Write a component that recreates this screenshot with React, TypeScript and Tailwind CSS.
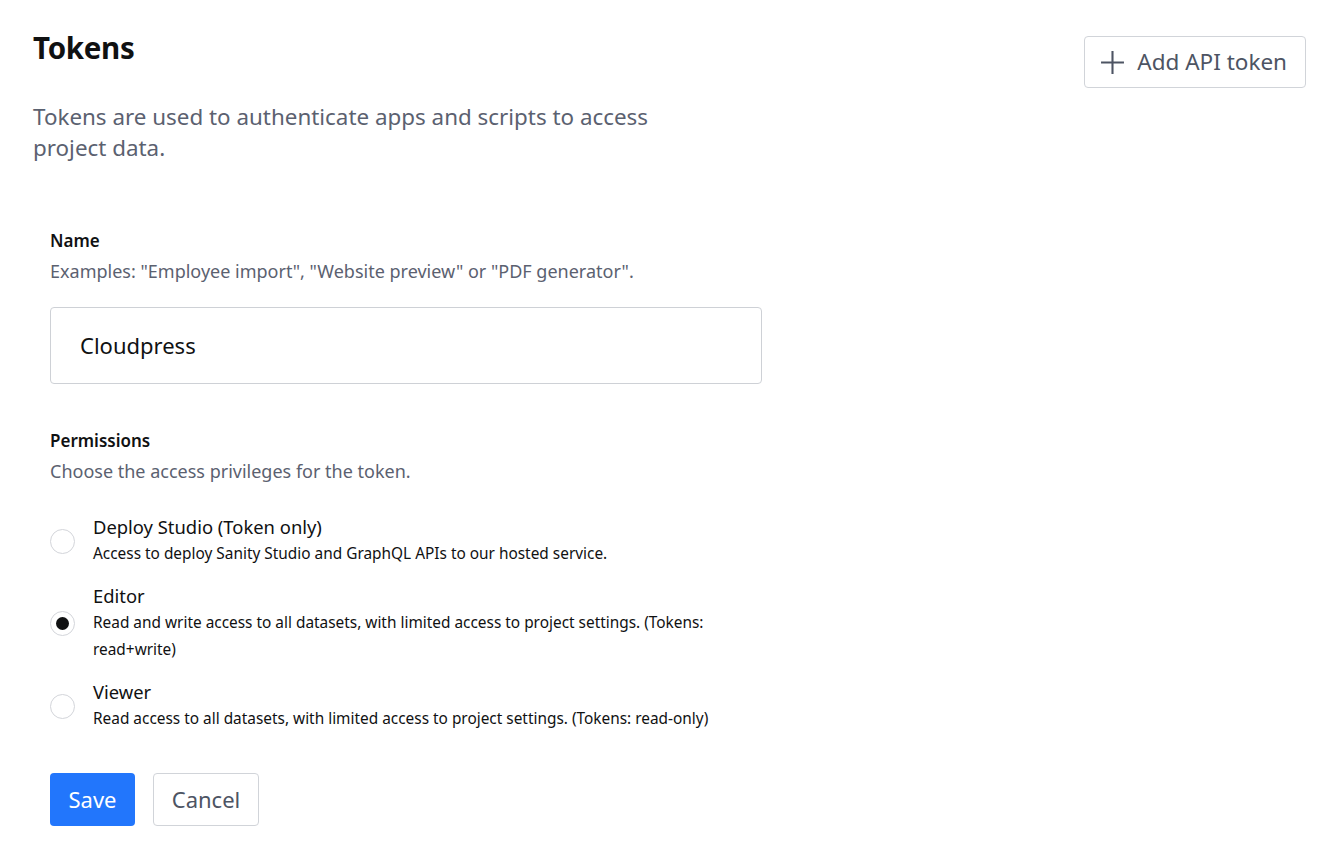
import React from "react";

function Radio({ checked }: { checked?: boolean }) {
  return (
    <span className="mt-[1px] flex h-[25px] w-[25px] shrink-0 items-center justify-center rounded-full border-[1.5px] border-[#d3d5da] bg-white">
      {checked && <span className="block h-[13px] w-[13px] rounded-full bg-[#101112]" />}
    </span>
  );
}

const options = [
  {
    title: "Deploy Studio (Token only)",
    desc: "Access to deploy Sanity Studio and GraphQL APIs to our hosted service.",
    checked: false,
  },
  {
    title: "Editor",
    desc: "Read and write access to all datasets, with limited access to project settings. (Tokens: read+write)",
    checked: true,
  },
  {
    title: "Viewer",
    desc: "Read access to all datasets, with limited access to project settings. (Tokens: read-only)",
    checked: false,
  },
];

export default function App() {
  return (
    <div
      className="min-h-[858px] bg-white px-[33px] pt-[28px] text-[#101112]"
      style={{ fontFamily: '"Noto Sans", "Open Sans", sans-serif' }}
    >
      <div className="flex items-start justify-between">
        <div>
          <h1 className="text-[29.5px] font-bold leading-[40px] tracking-[-0.3px]">Tokens</h1>
          <p className="mt-[33px] w-[680px] text-[22.4px] leading-[31px] text-[#5b6170]">
            Tokens are used to authenticate apps and scripts to access project data.
          </p>
        </div>
        <button className="mt-[8px] mr-[-2px] flex h-[52px] items-center gap-[12px] rounded-[4px] border border-[#d1d4d9] bg-white pl-[15px] pr-[18px] text-[22.5px] text-[#4d5463]">
          <svg width="25" height="25" viewBox="0 0 24 24" fill="none" stroke="#4d5463" strokeWidth="2">
            <path d="M12 1v22M1 12h22" />
          </svg>
          <span>Add API token</span>
        </button>
      </div>

      <div className="mt-[66px] pl-[17px]">
        <div className="text-[17px] font-semibold leading-[24px]">Name</div>
        <div className="mt-[7px] text-[18px] leading-[22px] text-[#5b6170]">
          Examples: "Employee import", "Website preview" or "PDF generator".
        </div>
        <div className="mt-[25px] flex h-[77px] w-[712px] items-center rounded-[4px] border border-[#ced1d6] px-[29px] text-[22px]">
          Cloudpress
        </div>

        <div className="mt-[45px] text-[17px] font-semibold leading-[24px]">Permissions</div>
        <div className="mt-[7px] text-[18px] leading-[22px] text-[#5b6170]">
          Choose the access privileges for the token.
        </div>

        <div className="mt-[32px] flex flex-col gap-[16px]">
          {options.map((o) => (
            <div key={o.title} className="flex items-center gap-[18px]">
              <Radio checked={o.checked} />
              <div className="w-[640px]">
                <div className="text-[18.4px] leading-[26px]">{o.title}</div>
                <div className="text-[15.4px] leading-[27px]">{o.desc}</div>
              </div>
            </div>
          ))}
        </div>

        <div className="mt-[41px] flex gap-[18px]">
          <button className="h-[53px] w-[85px] rounded-[4px] bg-[#2276fc] text-[22px] text-white">Save</button>
          <button className="h-[53px] w-[106px] rounded-[4px] border border-[#d1d4d9] bg-white text-[22px] text-[#4d5463]">
            Cancel
          </button>
        </div>
      </div>
    </div>
  );
}
